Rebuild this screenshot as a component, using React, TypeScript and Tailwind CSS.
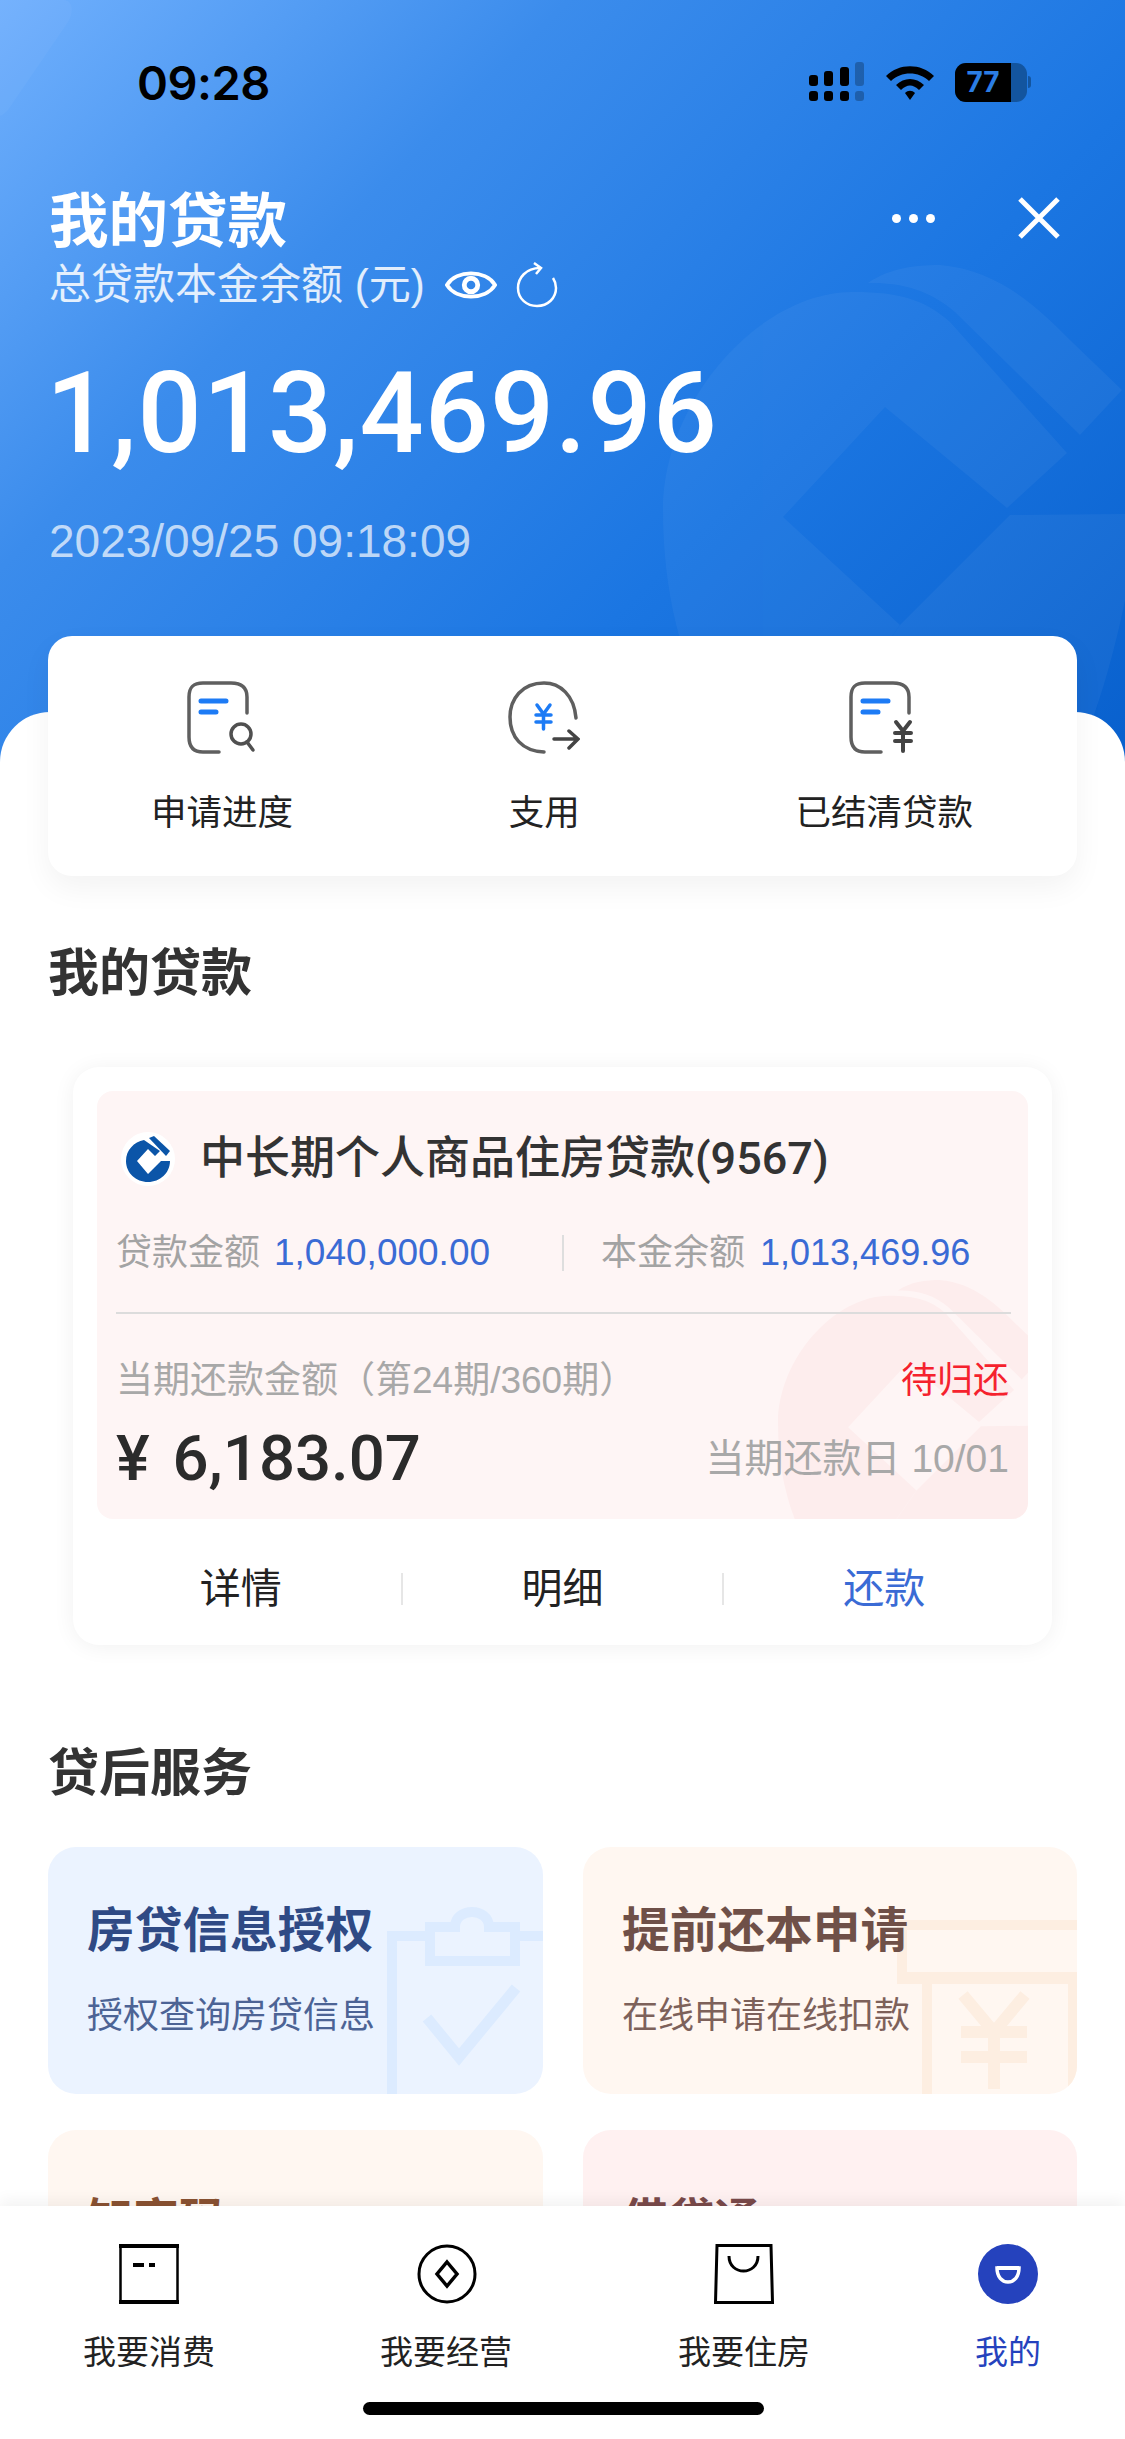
function CcbMark({ color, opacity }: { color: string; opacity: number }) {
  return (
    <svg viewBox="663 265 462 460" className="h-full w-full" fill={color}>
      <g style={{ opacity }}>
        <path d="M853 292 C900 292 925 300 950 322 L1067 453 L1007 508 L885 407 L783 517 L900 625 L830 725 L715 725 C680 660 663 590 663 510 C663 400 760 292 853 292Z" />
        <path d="M868 283 C890 268 915 265 940 265 C1000 270 1040 310 1070 340 L1122 390 L1080 435 L955 312 C930 290 900 282 868 283Z" />
        <path d="M1010 515 L1125 514 L1125 600 C1115 650 1100 700 1090 725 L830 725 L900 625Z" />
      </g>
    </svg>
  );
}

function StatusBar() {
  return (
    <div className="flex h-[40px] items-center justify-between pl-[137px] pr-[94px]">
      <span className="font-['Inter',sans-serif] text-[47px] leading-none font-semibold tracking-[-0.5px] text-black">09:28</span>
      <div className="flex items-center gap-[21px]">
        <svg width="56" height="40" viewBox="0 0 56 40">
          <rect x="0" y="13" width="9" height="11" rx="3" />
          <rect x="15" y="9" width="9" height="15" rx="3" />
          <rect x="31" y="5" width="9" height="19" rx="3" />
          <rect x="46" y="0" width="9" height="24" rx="3" opacity="0.25" />
          <rect x="0" y="29" width="9" height="10" rx="3" />
          <rect x="15" y="29" width="9" height="10" rx="3" />
          <rect x="31" y="29" width="9" height="10" rx="3" />
          <rect x="46" y="29" width="9" height="10" rx="3" opacity="0.25" />
        </svg>
        <svg width="48" height="38" viewBox="0 0 48 38">
          <path d="M0 13 C13 0 35 0 48 13 L43 18 C33 8 15 8 5 18Z" />
          <path d="M10 22 C18 14 30 14 38 22 L33 27 C27 21 21 21 15 27Z" />
          <path d="M19 30 C22 27 26 27 29 30 L24 37Z" />
        </svg>
        <div className="flex items-center">
          <div className="relative flex h-[39px] w-[72px] overflow-hidden rounded-[11px] bg-[#13559f]">
            <div className="flex h-full w-[56px] items-center justify-center bg-black">
              <span className="font-['Inter',sans-serif] text-[28px] font-bold leading-none text-[#2b7de4]">77</span>
            </div>
          </div>
          <div className="ml-[1px] h-[12px] w-[3px] rounded-r-full bg-[#13559f]" />
        </div>
      </div>
    </div>
  );
}

function Header() {
  return (
    <div className="relative h-[770px] shrink-0 overflow-hidden bg-[linear-gradient(135deg,#70b0fd_0%,#3b8cec_30%,#1b76e2_65%,#0860cd_100%)] pt-[62px]">
      <svg className="absolute left-0 top-0" width="80" height="120" viewBox="0 0 80 120" fill="white" opacity="0.03">
        <path d="M0 0 L65 0 C75 3 72 15 68 22 L8 110 Q0 118 0 115Z" />
      </svg>
      <div className="absolute left-[663px] top-[265px] h-[460px] w-[462px]">
        <CcbMark color="#ffffff" opacity={0.04} />
      </div>
      <div className="relative">
        <StatusBar />
        <div className="mt-[84px] flex items-start justify-between pl-[49px] pr-[65px]">
          <h1 className="text-[59.5px] leading-[72px] font-semibold text-white">我的贷款</h1>
          <div className="mt-[11px] flex items-center gap-[83px]">
            <div className="flex gap-[8px]">
              <span className="h-[9px] w-[9px] rounded-full bg-white" />
              <span className="h-[9px] w-[9px] rounded-full bg-white" />
              <span className="h-[9px] w-[9px] rounded-full bg-white" />
            </div>
            <svg width="42" height="42" viewBox="0 0 42 42" stroke="white" strokeWidth="5">
              <path d="M2 2 L40 40 M40 2 L2 40" />
            </svg>
          </div>
        </div>
        <div className="mt-[1px] flex items-center pl-[49px]">
          <span className="text-[42px] leading-[52px] text-white/85">总贷款本金余额 (元)</span>
          <svg className="ml-[20px]" width="52" height="40" viewBox="0 0 54 40" fill="none" stroke="white" strokeWidth="4">
            <path d="M2 20 C12 4 42 4 52 20 C42 36 12 36 2 20Z" />
            <circle cx="27" cy="20" r="7" strokeWidth="5" />
          </svg>
          <svg className="ml-[19px]" width="42" height="46" viewBox="0 0 42 46" fill="none" stroke="white" strokeWidth="2.5">
            <path d="M24 6 C10 6 2 16 2 26 C2 37 11 44 21 44 C32 44 40 36 40 26 C40 22 39 19 37 16" />
            <path d="M18 1 L25 6 L20 12" />
          </svg>
        </div>
        <div className="mt-[43px] pl-[46px] font-['Roboto',sans-serif] text-[113px] leading-[120px] font-medium tracking-[1px] text-white">1,013,469.96</div>
        <div className="mt-[41px] pl-[49px] text-[46px] leading-[52px] text-white/70">2023/09/25 09:18:09</div>
      </div>
    </div>
  );
}

function DocIcon({ corner }: { corner: React.ReactNode }) {
  return (
    <svg width="70" height="74" viewBox="0 0 70 74" fill="none" strokeLinecap="round">
      <path d="M32 71 L16 71 C6 71 2 65 2 56 L2 16 C2 6 6 2 16 2 L44 2 C54 2 60 6 60 16 L60 32" stroke="#5f5f5f" strokeWidth="3.5" />
      <path d="M14 20 L39 20 M14 31 L29 31" stroke="#1d7bf5" strokeWidth="5" />
      {corner}
    </svg>
  );
}

function QuickCard() {
  return (
    <div className="relative mx-[48px] -mt-[76px] flex h-[240px] items-start justify-between rounded-[24px] bg-white pl-[103px] pr-[104px] pt-[45px] shadow-[0_12px_30px_rgba(0,0,0,0.05)]">
      <div className="flex flex-col items-center">
        <DocIcon
          corner={
            <g stroke="#505050" strokeWidth="3.5">
              <circle cx="54" cy="53" r="10" />
              <path d="M60 61 L66 69" />
            </g>
          }
        />
        <span className="mt-[35px] text-[35.5px] leading-[46px] text-[#222]">申请进度</span>
      </div>
      <div className="flex flex-col items-center">
        <svg width="72" height="74" viewBox="0 0 72 74" fill="none" strokeLinecap="round">
          <path d="M68 37 C66 14 52 2 36 2 C14 2 2 18 2 36 C2 56 14 70 36 71" stroke="#5f5f5f" strokeWidth="3.5" />
          <path d="M29 24 L35.5 33 L42 24 M28 34 L43 34 M28 41 L43 41 M35.5 33 L35.5 48" stroke="#1d7bf5" strokeWidth="3.5" />
          <path d="M46 58 L69 58 M61 50 L70 58 L61 67" stroke="#444" strokeWidth="3.5" />
        </svg>
        <span className="mt-[35px] text-[35.5px] leading-[46px] text-[#222]">支用</span>
      </div>
      <div className="flex flex-col items-center">
        <DocIcon
          corner={
            <path d="M47 41 L54 50 L61 41 M46 52 L62 52 M46 60 L62 60 M54 50 L54 70" stroke="#444" strokeWidth="4" />
          }
        />
        <span className="mt-[35px] text-[35.5px] leading-[46px] text-[#222]">已结清贷款</span>
      </div>
    </div>
  );
}

function SectionTitle({ children }: { children: React.ReactNode }) {
  return <h2 className="pl-[48px] text-[51px] leading-[64px] font-semibold text-[#333]">{children}</h2>;
}

function LoanCard() {
  return (
    <div className="mx-[73px] mt-[61px] h-[578px] rounded-[26px] bg-white p-[24px] pb-0 shadow-[0_2px_22px_rgba(0,0,0,0.06)]">
      <div className="relative h-[428px] overflow-hidden rounded-[16px] bg-[#fef5f5] px-[19px]">
        <div className="absolute left-[681px] top-[189px] h-[269px] w-[270px]">
          <CcbMark color="#f3b5b5" opacity={0.12} />
        </div>
        <div className="relative">
          <div className="flex h-[134px] items-center pt-[1px]">
            <div className="ml-[5px] flex h-[54px] w-[54px] items-center justify-center rounded-full bg-white">
              <svg width="44" height="46" viewBox="0 0 44 46" fill="#0b55a8">
                <path d="M18 4 C8 6 0 14 0 25 C0 37 10 46 22 46 C34 46 44 37 44 25 L35 25 L22 38 L11 25 L22 13 L29 20 L34 15Z" />
                <path d="M23 2 L28 0 L44 15 L40 20Z" />
              </svg>
            </div>
            <span className="ml-[25px] font-['Roboto','Noto_Sans_CJK_SC',sans-serif] text-[45px] leading-[60px] font-medium text-[#333]">中长期个人商品住房贷款(9567)</span>
          </div>
          <div className="flex h-[56px] items-center text-[36px] leading-[48px]">
            <span className="text-[#a3a3a3]">贷款金额</span>
            <span className="ml-[14px] w-[216px] text-[37px] text-[#3a6bd5]">1,040,000.00</span>
            <span className="ml-[72px] h-[36px] w-[2px] bg-[#dedede]" />
            <span className="ml-[37px] text-[#a3a3a3]">本金余额</span>
            <span className="ml-[15px] text-[#3a6bd5]">1,013,469.96</span>
          </div>
          <div className="mt-[31px] h-[2px] w-[895px] bg-[#dcdcdc]" />
          <div className="mt-[43px] flex items-center justify-between text-[36px] leading-[48px]">
            <span className="text-[37px] text-[#a8a8a8]">当期还款金额（第24期/360期）</span>
            <span className="text-[#f5222d]">待归还</span>
          </div>
          <div className="mt-[19px] flex items-center justify-between">
            <span className="font-['Roboto','Noto_Sans_CJK_SC',sans-serif] text-[63.5px] leading-[70px] font-medium [word-spacing:7px] text-[#2b2b2b]">¥ 6,183.07</span>
            <span className="text-[39px] leading-[50px] text-[#a8a8a8]">当期还款日 10/01</span>
          </div>
        </div>
      </div>
      <div className="-mx-[16px] mt-[40px] flex items-center text-[41px] leading-[60px]">
        <span className="flex-1 text-center text-[#222]">详情</span>
        <span className="h-[32px] w-[2px] bg-[#e6e6e6]" />
        <span className="flex-1 text-center text-[#222]">明细</span>
        <span className="h-[32px] w-[2px] bg-[#e6e6e6]" />
        <span className="flex-1 text-center text-[#3a6bd5]">还款</span>
      </div>
    </div>
  );
}

function Services() {
  return (
    <div className="mx-[48px] mt-[41px] grid grid-cols-[495px_494px] gap-x-[40px] gap-y-[36px]">
      <div className="relative h-[247px] overflow-hidden rounded-[28px] bg-[#ebf3ff] pl-[39px] pt-[54px]">
        <svg className="absolute left-[335px] top-[60px]" width="160" height="187" viewBox="0 0 160 187" fill="none" stroke="#dcebff" strokeWidth="10">
          <path d="M9 187 L9 29 L47 29 M132 29 L160 29" />
          <path d="M47 20 L72 20 C72 0 106 0 106 20 L132 20 L132 54 L47 54Z" />
          <path d="M44 111 L76 150 L133 81" strokeWidth="11" />
        </svg>
        <div className="relative text-[47.7px] leading-[60px] font-semibold text-[#2f4a85]">房贷信息授权</div>
        <div className="relative mt-[32px] text-[36px] leading-[46px] text-[#4c6395]">授权查询房贷信息</div>
      </div>
      <div className="relative h-[247px] overflow-hidden rounded-[28px] bg-[#fff7f1] pl-[39px] pt-[54px]">
        <svg className="absolute left-[310px] top-[70px]" width="185" height="177" viewBox="0 0 185 177" fill="none" stroke="#fdeee1" strokeWidth="10">
          <path d="M185 8 L9 8 L9 61" />
          <path d="M4 61 L185 61" strokeWidth="12" />
          <path d="M34 61 L34 177 M180 61 L180 177" />
          <path d="M70 78 L101 115 L132 78 M68 115 L134 115 M68 140 L134 140 M101 115 L101 172" strokeWidth="12" />
        </svg>
        <div className="relative text-[47.7px] leading-[60px] font-semibold text-[#6f5048]">提前还本申请</div>
        <div className="relative mt-[32px] text-[36px] leading-[46px] text-[#7d615a]">在线申请在线扣款</div>
      </div>
      <div className="h-[247px] overflow-hidden rounded-[28px] bg-[#fff7f1] pl-[39px] pt-[60px]">
        <div className="text-[46px] leading-[60px] font-semibold text-[#8a5232]">知家码</div>
      </div>
      <div className="h-[247px] overflow-hidden rounded-[28px] bg-[#fff1f1] pl-[39px] pt-[60px]">
        <div className="text-[46px] leading-[60px] font-semibold text-[#7a4a4a]">借贷通</div>
      </div>
    </div>
  );
}

function TabBar() {
  return (
    <div className="relative h-[233px] shrink-0 bg-white shadow-[0_-6px_14px_rgba(0,0,0,0.05)]">
      <div className="flex items-start pl-[83px] pt-[38px]">
        <div className="flex w-[297px] flex-col items-start">
          <svg className="ml-[36px]" width="60" height="60" viewBox="0 0 60 60" fill="none" stroke="black">
            <rect x="1.5" y="2" width="57" height="56" strokeWidth="2.5" />
            <path d="M0 2 L60 2 M0 58 L60 58" strokeWidth="4" />
            <path d="M14 21 L25 21 M30 21 L36 21" strokeWidth="4" />
          </svg>
          <span className="mt-[27px] text-[33px] leading-[44px] text-[#222]">我要消费</span>
        </div>
        <div className="flex w-[298px] flex-col items-start">
          <svg className="ml-[37px]" width="60" height="60" viewBox="0 0 60 60" fill="none" stroke="black" strokeWidth="3">
            <circle cx="30" cy="30" r="28" />
            <path d="M30 18 L40 30 L30 42 L20 30Z" strokeWidth="3.5" />
          </svg>
          <span className="mt-[27px] text-[33px] leading-[44px] text-[#222]">我要经营</span>
        </div>
        <div className="flex w-[297px] flex-col items-start">
          <svg className="ml-[36px]" width="60" height="60" viewBox="0 0 60 60" fill="none" stroke="black" strokeWidth="3">
            <path d="M3 1.5 L57 1.5 L58.5 58.5 L1.5 58.5Z" />
            <path d="M15 12 C15 32 44 32 44 12" />
          </svg>
          <span className="mt-[27px] text-[33px] leading-[44px] text-[#222]">我要住房</span>
        </div>
        <div className="flex flex-col items-center">
          <svg width="60" height="60" viewBox="0 0 60 60">
            <circle cx="30" cy="30" r="30" fill="#2542bd" />
            <path d="M19 24 L41 24 C41 33 36 38 30 38 C24 38 19 33 19 24Z" fill="none" stroke="white" strokeWidth="3.5" />
            <path d="M19 24 L41 24" stroke="white" strokeWidth="4" />
          </svg>
          <span className="mt-[27px] text-[33px] leading-[44px] text-[#2542bd]">我的</span>
        </div>
      </div>
      <div className="absolute bottom-[24px] left-[363px] h-[13px] w-[401px] rounded-full bg-black" />
    </div>
  );
}

export default function App() {
  return (
    <div className="flex h-[2439px] w-[1125px] flex-col overflow-hidden bg-white [font-family:'Liberation_Sans','Noto_Sans_CJK_SC',sans-serif]">
      <div className="min-h-0 flex-1 overflow-hidden">
        <Header />
        <div className="relative -mt-[58px] flow-root rounded-t-[50px] bg-white">
          <QuickCard />
          <div className="h-[66px]" />
          <SectionTitle>我的贷款</SectionTitle>
          <LoanCard />
          <div className="h-[97px]" />
          <SectionTitle>贷后服务</SectionTitle>
          <Services />
        </div>
      </div>
      <TabBar />
    </div>
  );
}
